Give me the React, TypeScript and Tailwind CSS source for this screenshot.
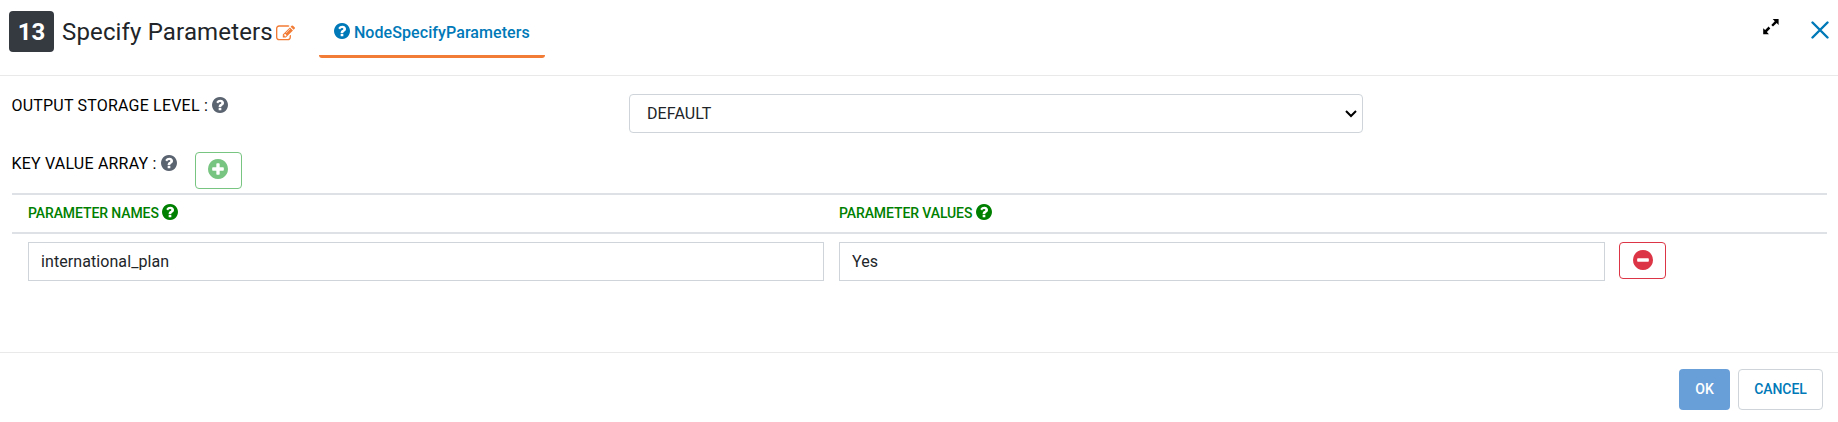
import React from "react";

const DISC =
  "M1664 896q0 209-103 385.5t-279.5 279.5-385.5 103-385.5-103-279.5-279.5-103-385.5 103-385.5 279.5-279.5 385.5-103 385.5 103 279.5 279.5 103 385.5z";

function HelpIcon({ className = "" }: { className?: string }) {
  return (
    <svg viewBox="128 128 1536 1536" fill="currentColor" className={`size-4 shrink-0 ${className}`}>
      <path
        fillRule="evenodd"
        d={`M1024 1376v-192q0-14-9-23t-23-9h-192q-14 0-23 9t-9 23v192q0 14 9 23t23 9h192q14 0 23-9t9-23zM1280 704q0-88-55.5-163t-138.5-116-170-41q-243 0-371 213-15 24 8 42l132 100q7 6 19 6 16 0 25-12 53-68 86-92 34-24 86-24 48 0 85.5 26t37.5 59q0 38-20 61t-68 45q-63 28-115.5 86.5t-52.5 125.5v36q0 14 9 23t23 9h192q14 0 23-9t9-23q0-19 21.5-49.5t54.5-49.5q32-18 49-28.5t46-35 44.5-48 28-60.5 12.5-81z${DISC}`}
      />
    </svg>
  );
}

function PlusIcon() {
  return (
    <svg viewBox="128 128 1536 1536" fill="currentColor" className="size-5">
      <path
        fillRule="evenodd"
        d={`M1344 960v-128q0-26-19-45t-45-19h-256v-256q0-26-19-45t-45-19h-128q-26 0-45 19t-19 45v256h-256q-26 0-45 19t-19 45v128q0 26 19 45t45 19h256v256q0 26 19 45t45 19h128q26 0 45-19t19-45v-256h256q26 0 45-19t19-45z${DISC}`}
      />
    </svg>
  );
}

function MinusIcon() {
  return (
    <svg viewBox="128 128 1536 1536" fill="currentColor" className="size-5">
      <path
        fillRule="evenodd"
        d={`M1344 960v-128q0-26-19-45t-45-19h-768q-26 0-45 19t-19 45v128q0 26 19 45t45 19h768q26 0 45-19t19-45z${DISC}`}
      />
    </svg>
  );
}

function EditIcon() {
  return (
    <svg viewBox="0 0 1792 1792" fill="currentColor" className="mt-[3px] ml-[3px] size-[19px] shrink-0 overflow-visible text-[#f27b35]">
      <path d="M888 1184l116-116-152-152-116 116v56h96v96h56zm440-720q-16-16-33 1l-350 350q-17 17-1 33t33-1l350-350q17-17 1-33zm80 594v190q0 119-84.5 203.5t-203.5 84.5h-832q-119 0-203.5-84.5t-84.5-203.5v-832q0-119 84.5-203.5t203.5-84.5h832q63 0 117 25 15 7 18 23 3 17-9 29l-49 49q-14 14-32 8-23-6-45-6h-832q-66 0-113 47t-47 113v832q0 66 47 113t113 47h832q66 0 113-47t47-113v-126q0-13 9-22l64-64q15-15 35-7t20 29zm-96-738l288 288-672 672h-288v-288zm444 132l-92 92-288-288 92-92q28-28 68-28t68 28l152 152q28 28 28 68t-28 68z" />
    </svg>
  );
}

function ExpandIcon() {
  return (
    <svg viewBox="0 0 16 16" className="size-4" fill="#000">
      <path d="M9.7 0H15.6V6L13.7 4.1 10 7.6 8.3 5.9 11.8 2.2zM5.9 15.2H0.2V9.2L2.1 11.1 5.6 7.6 7.3 9.4 3.9 13.1z" />
    </svg>
  );
}

export default function App() {
  return (
    <div className="flex h-[422px] w-full flex-col bg-white font-['Roboto',sans-serif] text-[#212529]">
      <header className="flex h-[76px] shrink-0 items-start border-b border-[#e9e9e9] pl-[9px]">
        <div className="mt-[11px] flex h-[41px] w-[45px] items-center justify-center rounded bg-[#343a40] text-2xl font-bold text-white">
          13
        </div>
        <div className="mt-[11px] ml-2 flex h-[41px] items-center">
          <h1 className="text-2xl tracking-[0.15px] whitespace-nowrap">Specify Parameters</h1>
          <EditIcon />
        </div>
        <a className="ml-[24px] flex h-[58px] w-[226px] items-center justify-center gap-1 rounded-[3px] border-b-3 border-[#f27b35] pt-[10px] text-base font-medium tracking-[0.08px] text-[#0079b8]">
          <HelpIcon className="-mt-[3px]" />
          NodeSpecifyParameters
        </a>
        <div className="mr-[9px] ml-auto flex">
          <button className="mt-[19px] h-4">
            <ExpandIcon />
          </button>
          <button className="mt-[21px] ml-8 h-[18px]">
            <svg viewBox="0 0 18 18" className="size-[18px]" stroke="#0079b8" strokeWidth="2.4" strokeLinecap="round">
              <path d="M1.5 1.5l15 15M16.5 1.5l-15 15" />
            </svg>
          </button>
        </div>
      </header>

      <main className="flex h-[276px] shrink-0 flex-col px-3 text-base">
        <div className="flex h-[76px] items-start pt-[18px]">
          <label className="-ml-[0.5px] flex w-[617.5px] items-center gap-1 tracking-[0.2px] text-black">
            OUTPUT STORAGE LEVEL : <HelpIcon className="-mt-0.5 text-[#5a6370]" />
          </label>
          <div className="flex h-[39px] w-[734px] items-center justify-between rounded border border-[#ced4da] pr-[5px] pl-[17px]">
            <span className="tracking-[0.1px]">DEFAULT</span>
            <svg viewBox="0 0 12 8" className="w-3" fill="none" stroke="#000" strokeWidth="2">
              <path d="M1 1l5 5 5-5" />
            </svg>
          </div>
        </div>
        <div className="flex h-[41px] items-start">
          <label className="-ml-[0.5px] flex items-center gap-1 tracking-[0.2px] text-black">
            KEY VALUE ARRAY : <HelpIcon className="-mt-0.5 text-[#5a6370]" />
          </label>
          <button className="ml-[18px] flex h-[37px] w-[47px] items-start justify-center rounded border border-[#77c580] pt-[6px] text-[#77c580]">
            <PlusIcon />
          </button>
        </div>
        <div className="mr-[-1px] flex h-[41px] items-start border-y-2 border-[#dee2e6] pt-2 pl-4 text-sm font-medium tracking-[-0.1px] text-[#008000]">
          <div className="flex w-[811px] items-center gap-[3.5px]">
            PARAMETER NAMES <HelpIcon className="-mt-[3px]" />
          </div>
          <div className="flex items-center gap-[3.5px]">
            PARAMETER VALUES <HelpIcon className="-mt-[3px]" />
          </div>
        </div>
        <div className="flex items-start pt-2 pl-4 tracking-[0.08px]">
          <div className="flex h-[39px] w-[796px] items-center border border-[#ced4da] px-3">international_plan</div>
          <div className="ml-[15px] flex h-[39px] w-[766px] items-center border border-[#ced4da] px-3">Yes</div>
          <button className="ml-[14px] flex h-[37px] w-[47px] items-start justify-center rounded border border-[#dc3545] pt-[7px] text-[#dc3545]">
            <MinusIcon />
          </button>
        </div>
      </main>

      <footer className="flex grow items-start justify-end gap-2 border-t border-[#e9e9e9] pt-4 pr-[15px] text-sm font-medium tracking-[-0.1px]">
        <button className="h-[41px] w-[51px] rounded bg-[#689fd9] pb-px text-white">OK</button>
        <button className="h-[41px] w-[85px] rounded border border-[#ced4da] pb-px text-[#0079b8]">CANCEL</button>
      </footer>
    </div>
  );
}
